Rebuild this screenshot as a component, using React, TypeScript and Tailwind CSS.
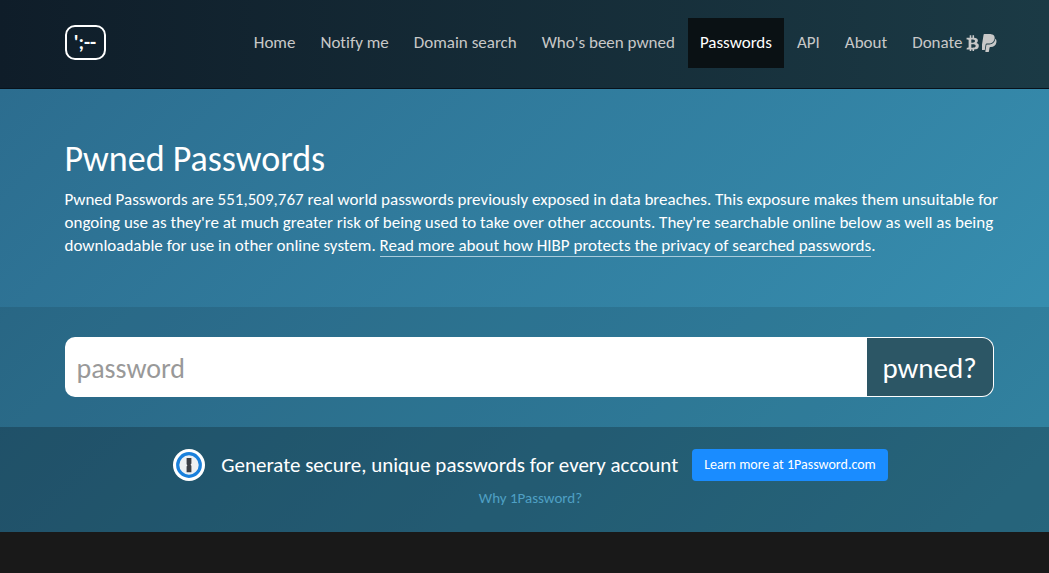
const NAV_LINKS = [
  { href: "#home", label: "Home" },
  { href: "#notify", label: "Notify me" },
  { href: "#domain", label: "Domain search" },
  { href: "#pwned", label: "Who's been pwned" },
  { href: "#passwords", label: "Passwords", active: true },
  { href: "#api", label: "API" },
  { href: "#about", label: "About" },
];

function BitcoinIcon() {
  return (
    <svg viewBox="0 128 1280 1536" className="h-4 w-[13px]" fill="currentColor" aria-hidden="true">
      <path d="M1167 640q18 182-131 258 117 28 175 103t45 214q-7 71-32.5 125t-64.5 89-97 58.5-121.5 34.5-145.5 15v255h-154v-251q-80 0-122-1v252h-154v-255q-18 0-54-.5t-55-.5h-200l31-183h111q50 0 58-51v-402h16q-6-1-16-1v-287q-13-68-89-68h-111v-164l212 1q64 0 97-1v-252h154v247q82-2 122-2v-245h154v252q79 7 140 22.5t113 45 82.5 78 36.5 114.5zm-215 545q0-36-15-64t-37-46-57.5-30.5-65.5-18.5-74-9-69-3-64.5 1-47.5 1v338q8 0 37 .5t48 .5 53-1.5 58.5-4 57-8.5 55.5-14 47.5-21 39.5-30 24.5-40 9.5-51zm-71-476q0-33-12.5-58.5t-30.5-42-48-28-55-16.5-61.5-8-58-2.5-54 1-39.5.5v307q5 0 34.5.5t46.5 0 50-2 55-5.5 51.5-11 48.5-18.5 37-27 27-38.5 9-51z" />
    </svg>
  );
}

function PaypalIcon() {
  return (
    <svg viewBox="128 0 1408 1792" className="h-[18px] w-[15px]" fill="currentColor" aria-hidden="true">
      <path d="M1519 646q18 84-4 204-87 444-565 444h-44q-25 0-44 16.5t-24 42.5l-4 19-55 346-2 15q-5 26-24.5 42.5t-44.5 16.5h-251q-21 0-33-15t-9-36q9-56 26.5-168t26.5-168 27-167.5 27-167.5q5-37 43-37h131q133 2 236-21 175-39 287-144 102-95 155-246 24-70 35-133 1-6 2.5-7.5t3.5-1 6 3.5q79 59 98 162z" />
      <path d="M1347 364q0 107-46 236-80 233-302 315-113 40-252 42 0 1-90 1l-90-1q-100 0-118 96-2 8-85 530-1 10-12 10h-295q-22 0-36.5-16.5t-11.5-38.5l232-1471q5-29 27.5-48t51.5-19h598q34 0 97.5 13t111.5 32q107 41 163.5 123t56.5 196z" />
    </svg>
  );
}

function Header() {
  return (
    <header className="border-b border-[#07121b] bg-linear-to-r/srgb from-[#0f1d29] to-[#1b3a45]">
      <div className="mx-auto flex max-w-[938px] items-start justify-between pt-[18px] pb-5 pl-[9px]">
        <a
          href="#home"
          aria-label="Home"
          className="mt-[7px] flex h-[35px] w-[41px] justify-center rounded-[10px] border-2 border-white text-[20px] leading-[31px] font-bold text-white"
        >
          &apos;;--
        </a>
        <nav className="-mr-[15px]">
          <ul className="flex gap-px text-[17px] leading-[50px] whitespace-nowrap text-[#c8c8c8]">
            {NAV_LINKS.map((link) => (
              <li key={link.href}>
                <a
                  href={link.href}
                  className={
                    link.active
                      ? "block bg-[#0a1114] px-3 text-white"
                      : "block px-3 hover:text-white"
                  }
                >
                  {link.label}
                </a>
              </li>
            ))}
            <li>
              <a href="#donate" className="flex items-center gap-[3px] px-3 hover:text-white">
                Donate
                <BitcoinIcon />
                <PaypalIcon />
              </a>
            </li>
          </ul>
        </nav>
      </div>
    </header>
  );
}

function Intro() {
  return (
    <section className="py-[50px]">
      <div className="mx-auto max-w-[938px] pl-[9px]">
        <h1 className="text-[36px] leading-10">Pwned Passwords</h1>
        <p className="-mr-3 mt-[9px] text-[17px] leading-[23px]">
          Pwned Passwords are 551,509,767 real world passwords previously exposed in data breaches.
          This exposure makes them unsuitable for ongoing use as they're at much greater risk of
          being used to take over other accounts. They're searchable online below as well as being
          downloadable for use in other online system.{" "}
          <a href="#privacy" className="border-b border-[#a9cbdb]">
            Read more about how HIBP protects the privacy of searched passwords
          </a>
          .
        </p>
      </div>
    </section>
  );
}

function SearchForm() {
  return (
    <section className="bg-black/10 py-[30px]">
      <form
        className="mx-auto max-w-[938px] pl-[9px]"
        onSubmit={(event) => event.preventDefault()}
      >
        <div className="flex h-[60px]">
          <input
            type="password"
            aria-label="password"
            placeholder="password"
            className="min-w-0 flex-1 rounded-l-[10px] bg-white px-3 pt-1 text-[28px] text-[#333] outline-none placeholder:text-[#999]"
          />
          <button
            type="submit"
            className="w-[127px] rounded-r-[12px] border border-l-0 border-white bg-[#2c5665] pt-1 text-[29px]"
          >
            pwned?
          </button>
        </div>
      </form>
    </section>
  );
}

function OnePasswordLogo() {
  return (
    <svg viewBox="0 0 32 32" className="size-8" aria-hidden="true">
      <circle cx="16" cy="16" r="16" fill="#fff" />
      <circle cx="16" cy="16" r="11.3" fill="#eef0f2" stroke="#1a80dc" strokeWidth="3.2" />
      <path
        d="M13.6 9h4.8v5.6l-.8 1.2.8 1v6.4h-4.8v-5.8l.8-1.2-.8-1z"
        fill="#3b3e45"
      />
    </svg>
  );
}

function Promo() {
  return (
    <section className="bg-black/31 py-5 pl-3">
      <div className="flex items-center justify-center">
        <OnePasswordLogo />
        <p className="ml-4 text-[21px] leading-9">
          Generate secure, unique passwords for every account
        </p>
        <a
          href="#1password"
          className="ml-[14px] rounded-[4px] bg-[#1a8cff] px-3 text-[14px] leading-8"
        >
          Learn more at 1Password.com
        </a>
      </div>
      <p className="mt-1 pb-[2px] text-center text-[15px] leading-[23px]">
        <a href="#why" className="text-[#4fa0c4]">
          Why 1Password?
        </a>
      </p>
    </section>
  );
}

export default function App() {
  return (
    <div className="min-h-screen bg-[#191919] font-['Carlito','Lato',sans-serif] text-white [font-variant-ligatures:none]">
      <Header />
      <main className="bg-linear-[135deg] from-[#2c6d8f] to-[#3893b4]">
        <Intro />
        <SearchForm />
        <Promo />
      </main>
    </div>
  );
}
